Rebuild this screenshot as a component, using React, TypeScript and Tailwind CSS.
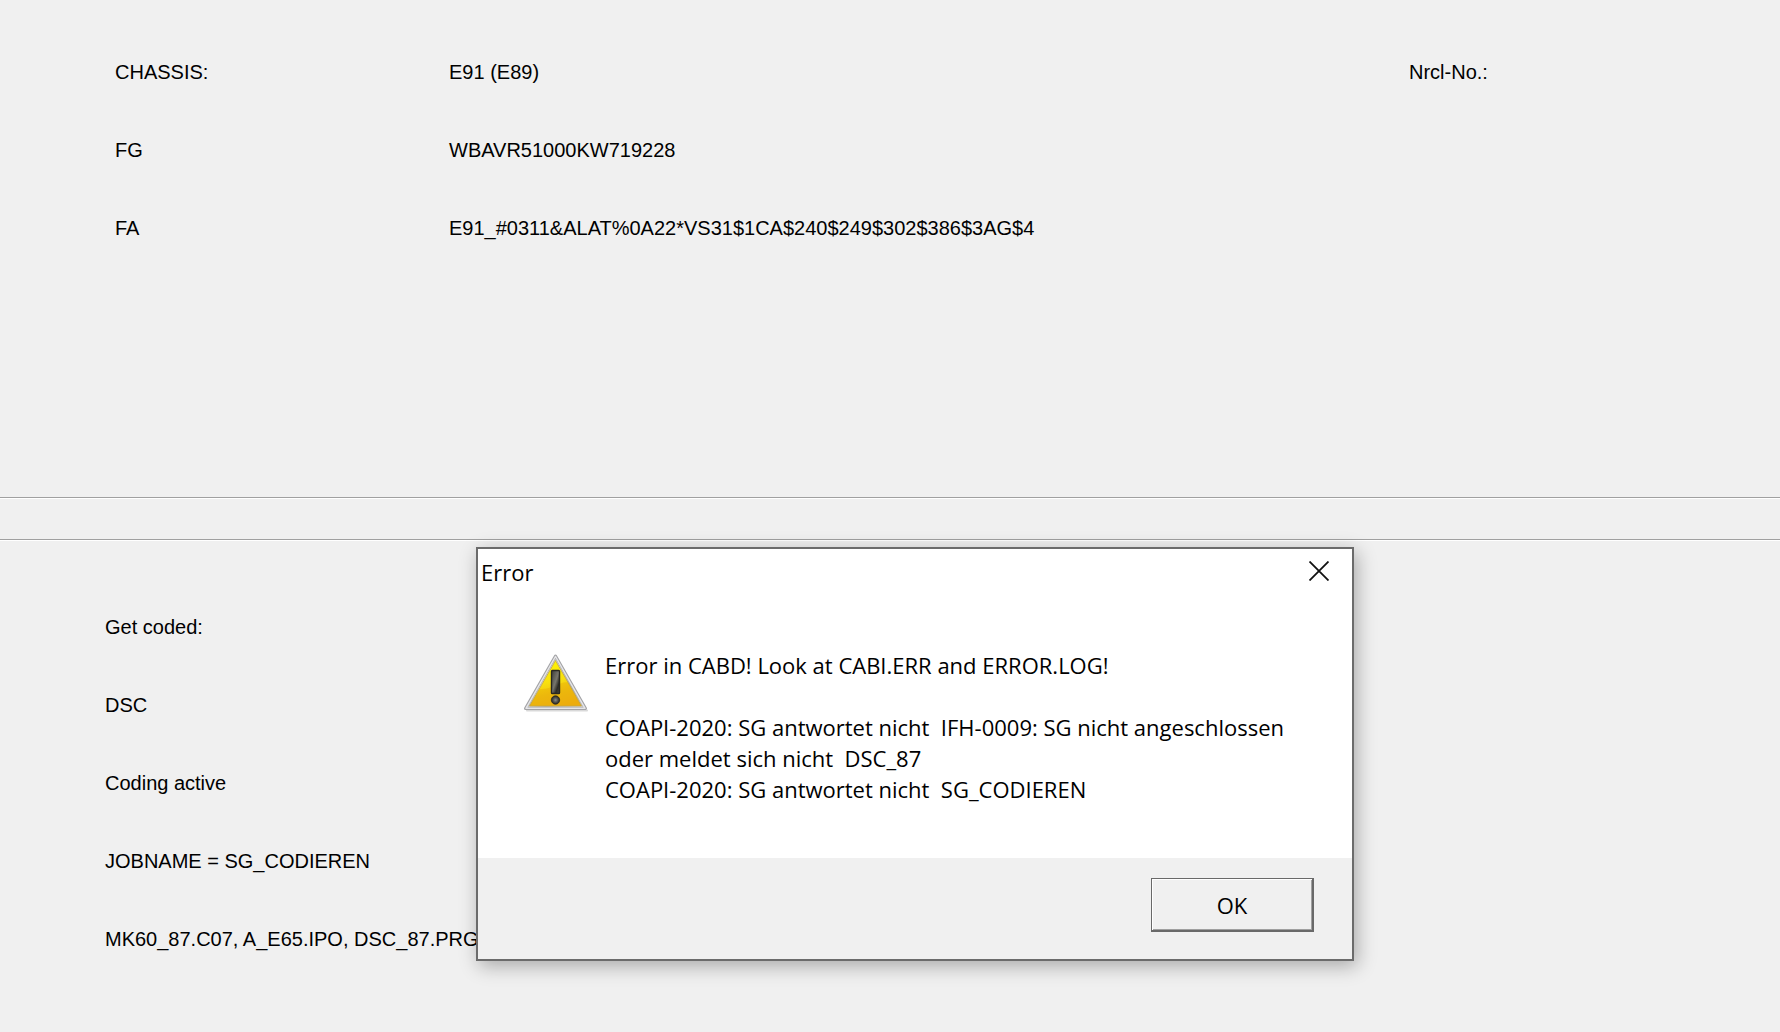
import { useState } from 'react'

const vehicle = [
  { label: 'CHASSIS:', value: 'E91 (E89)', extra: 'Nrcl-No.:' },
  { label: 'FG', value: 'WBAVR51000KW719228' },
  { label: 'FA', value: 'E91_#0311&ALAT%0A22*VS31$1CA$240$249$302$386$3AG$4' },
]

const status = [
  'Get coded:',
  'DSC',
  'Coding active',
  'JOBNAME = SG_CODIEREN',
  'MK60_87.C07, A_E65.IPO, DSC_87.PRG',
]

const message = `Error in CABD! Look at CABI.ERR and ERROR.LOG!

COAPI-2020: SG antwortet nicht  IFH-0009: SG nicht angeschlossen
oder meldet sich nicht  DSC_87
COAPI-2020: SG antwortet nicht  SG_CODIEREN`

function WarningIcon() {
  return (
    <svg width="68" height="60" viewBox="0 0 68 60" className="shrink-0" aria-hidden="true">
      <defs>
        <linearGradient id="frame" x1="0" y1="0" x2="1" y2="1">
          <stop offset="0" stopColor="#b5b5b5" />
          <stop offset="0.35" stopColor="#ececec" />
          <stop offset="0.65" stopColor="#b4b4b4" />
          <stop offset="1" stopColor="#d8d8dc" />
        </linearGradient>
        <linearGradient id="fill" x1="0.3" y1="0" x2="0.6" y2="1">
          <stop offset="0" stopColor="#fff600" />
          <stop offset="0.45" stopColor="#f8e010" />
          <stop offset="0.7" stopColor="#f0c412" />
          <stop offset="1" stopColor="#f0b414" />
        </linearGradient>
        <linearGradient id="bar" x1="0" y1="0" x2="1" y2="1">
          <stop offset="0" stopColor="#3c3c38" />
          <stop offset="0.5" stopColor="#77756c" />
          <stop offset="0.75" stopColor="#2b2a26" />
          <stop offset="1" stopColor="#4b4940" />
        </linearGradient>
        <radialGradient id="dot">
          <stop offset="0" stopColor="#8a8a84" />
          <stop offset="1" stopColor="#25241f" />
        </radialGradient>
      </defs>
      <path d="M4 57.500H64" stroke="#c9c9c9" strokeWidth="2" strokeLinecap="round" opacity="0.7" />
      <path d="M32.500 3 62.500 55.500H2.500Z" fill="url(#frame)" stroke="#a3a3a6" strokeWidth="3" strokeLinejoin="round" />
      <path d="M32.500 3.500 62 55.300H3Z" fill="none" stroke="#e6e6e8" strokeWidth="1.500" strokeLinejoin="round" />
      <path d="M32.500 7.500 58.500 53H6.500Z" fill="url(#fill)" stroke="#bda24c" strokeWidth="0.800" />
      <path d="M17 36C28 37 38 28 45 29.500L58 52.500H7Z" fill="#e59a00" opacity="0.3" />
      <rect x="28.500" y="17.500" width="8" height="23" rx="0.800" fill="url(#bar)" stroke="#292820" strokeWidth="1.400" />
      <circle cx="32.500" cy="47" r="4.200" fill="url(#dot)" stroke="#292820" strokeWidth="0.800" />
    </svg>
  )
}

function ErrorDialog({ onClose }: { onClose: () => void }) {
  return (
    <div
      role="dialog"
      aria-labelledby="dialog-title"
      className="absolute left-[476px] top-[547px] w-[878px] border-2 border-[#6b6b6b] bg-white font-['Open_Sans',sans-serif] text-[22px] leading-[31px] shadow-[3px_5px_18px_rgba(0,0,0,0.3)]"
    >
      <div className="flex items-start justify-between pl-[3px] pr-[23px] pt-2">
        <h1 id="dialog-title">Error</h1>
        <button type="button" aria-label="Close" onClick={onClose} className="pt-1">
          <svg width="20" height="20" viewBox="0 0 20 20" fill="none" stroke="#111" strokeWidth="1.800">
            <path d="M0.500 0.500 19.500 19.500M19.500 0.500 0.500 19.500" />
          </svg>
        </button>
      </div>

      <div className="flex items-start pb-[53px] pl-[45px] pt-[62px]">
        <div className="pt-[3px]">
          <WarningIcon />
        </div>
        <p className="whitespace-pre pl-[14px]">{message}</p>
      </div>

      <div className="flex justify-end bg-[#f0f0f0] pb-[27px] pr-[38px] pt-5">
        <button
          type="button"
          onClick={onClose}
          className="h-[54px] w-[163px] border border-b-2 border-r-2 border-[#696969] bg-[#f0f0f0] pt-px shadow-[inset_1px_1px_0_#fff,inset_-1px_-1px_0_#a0a0a0]"
        >
          OK
        </button>
      </div>
    </div>
  )
}

export default function App() {
  const [open, setOpen] = useState(true)

  return (
    <main className="relative min-h-screen overflow-hidden bg-[#f0f0f0] font-['Liberation_Sans',sans-serif] text-xl text-black">
      <dl className="pb-[230px] pl-[115px] pt-[33px]">
        {vehicle.map((row) => (
          <div key={row.label} className="grid grid-cols-[334px_1fr_371px] leading-[78px]">
            <dt>{row.label}</dt>
            <dd>{row.value}</dd>
            {row.extra && <dt>{row.extra}</dt>}
          </div>
        ))}
      </dl>

      {/* Etched separator bar */}
      <div className="border-y border-[#a0a0a0] shadow-[0_1px_0_#fff,inset_0_1px_0_#fff]">
        <div className="h-[41px]" />
      </div>

      <section className="pl-[105px] pt-[48px]">
        {status.map((line) => (
          <p key={line} className="leading-[78px]">{line}</p>
        ))}
      </section>

      {open && <ErrorDialog onClose={() => setOpen(false)} />}
    </main>
  )
}
